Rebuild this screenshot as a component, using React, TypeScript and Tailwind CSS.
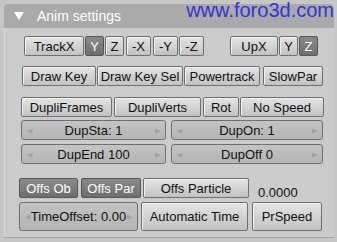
import React from 'react';

type Btn = { label: string; w: number; dark?: boolean; gap?: number };

const font = { fontFamily: '"Liberation Sans", Arial, sans-serif' };

function Button({ label, w, dark, h = 20 }: { label: string; w: number; dark?: boolean; h?: number }) {
  return (
    <div
      className={
        'flex shrink-0 items-center justify-center whitespace-nowrap rounded-[2px] border text-[13px] leading-none ' +
        (dark
          ? 'border-[#555] bg-gradient-to-b from-[#8a8a8a] to-[#6e6e6e] text-white'
          : 'border-[#6f6f6f] bg-gradient-to-b from-[#e4e4e4] to-[#c2c2c2] text-[#111] shadow-[inset_1px_1px_0_#f2f2f2]')
      }
      style={{ width: w, height: h }}
    >
      {label}
    </div>
  );
}

function NumField({ label, w, h = 20 }: { label: string; w: number; h?: number }) {
  return (
    <div
      className="flex shrink-0 items-center justify-between whitespace-nowrap rounded-[3px] border border-[#6f6f6f] bg-gradient-to-b from-[#c4c4c4] to-[#b4b4b4] px-[5px] text-[13px] leading-none text-[#111]"
      style={{ width: w, height: h }}
    >
      <span className="text-[7px] text-[#a0a0a0]">◀</span>
      <span>{label}</span>
      <span className="text-[7px] text-[#a0a0a0]">▶</span>
    </div>
  );
}

function Row({ items, className }: { items: Btn[]; className: string }) {
  return (
    <div className={'flex ' + className}>
      {items.map((b, i) => (
        <div key={i} style={{ marginLeft: b.gap ?? 0 }}>
          <Button label={b.label} w={b.w} dark={b.dark} />
        </div>
      ))}
    </div>
  );
}

export default function App() {
  return (
    <div className="relative h-[242px] w-[337px] overflow-hidden bg-[#c6c6c6]" style={font}>
      <div className="ml-[4px] mt-[4px] flex h-[233px] w-[330px] flex-col rounded-t-[4px] bg-[#cbcbcb] shadow-[inset_1px_0_0_#d8d8d8,0_1px_0_#a0a0a0]">
        <div className="flex h-[24px] items-center rounded-t-[4px] bg-[#a9a9a9]">
          <svg width="10" height="8" viewBox="0 0 10 8" className="ml-[10px]">
            <polygon points="0,0 10,0 5,8" fill="#fff" />
          </svg>
          <span className="ml-[13px] text-[14px] text-white">Anim settings</span>
        </div>

        <Row
          className="ml-[20px] mt-[8px]"
          items={[
            { label: 'TrackX', w: 60 },
            { label: 'Y', w: 19, dark: true, gap: 1 },
            { label: 'Z', w: 19, gap: 1 },
            { label: '-X', w: 25, gap: 2 },
            { label: '-Y', w: 25, gap: 2 },
            { label: '-Z', w: 25, gap: 1 },
            { label: 'UpX', w: 48, gap: 26 },
            { label: 'Y', w: 19, gap: 1 },
            { label: 'Z', w: 19, dark: true, gap: 1 },
          ]}
        />

        <Row
          className="ml-[18px] mt-[10px]"
          items={[
            { label: 'Draw Key', w: 74 },
            { label: 'Draw Key Sel', w: 86, gap: 1 },
            { label: 'Powertrack', w: 76, gap: 1 },
            { label: 'SlowPar', w: 60, gap: 3 },
          ]}
        />

        <Row
          className="ml-[17px] mt-[11px]"
          items={[
            { label: 'DupliFrames', w: 91 },
            { label: 'DupliVerts', w: 87, gap: 2 },
            { label: 'Rot', w: 36, gap: 2 },
            { label: 'No Speed', w: 84, gap: 1 },
          ]}
        />

        <div className="ml-[17px] mt-[3px] flex gap-[5px]">
          <NumField label="DupSta: 1" w={145} />
          <NumField label="DupOn: 1" w={152} />
        </div>
        <div className="ml-[17px] mt-[4px] flex gap-[5px]">
          <NumField label="DupEnd 100" w={145} />
          <NumField label="DupOff 0" w={152} />
        </div>

        <div className="ml-[15px] mt-[14px] flex">
          <Button label="Offs Ob" w={59} dark />
          <div className="ml-[3px]">
            <Button label="Offs Par" w={60} dark />
          </div>
          <div className="ml-[2px]">
            <Button label="Offs Particle" w={106} />
          </div>
          <span className="ml-[9px] mt-[8px] text-[13px] leading-none text-[#111]">0.0000</span>
        </div>

        <div className="ml-[15px] mt-[3px] flex gap-[3px]">
          <NumField label="TimeOffset: 0.00" w={119} h={29} />
          <Button label="Automatic Time" w={107} h={29} />
          <div className="ml-[1px]">
            <Button label="PrSpeed" w={70} h={29} />
          </div>
        </div>
      </div>

      <div
        className="absolute right-[3px] top-[-1px] text-[20px] leading-[22px] text-[#3333dd]"
        style={{ fontFamily: '"Liberation Sans", Arial, sans-serif' }}
      >
        www.foro3d.com
      </div>
    </div>
  );
}
